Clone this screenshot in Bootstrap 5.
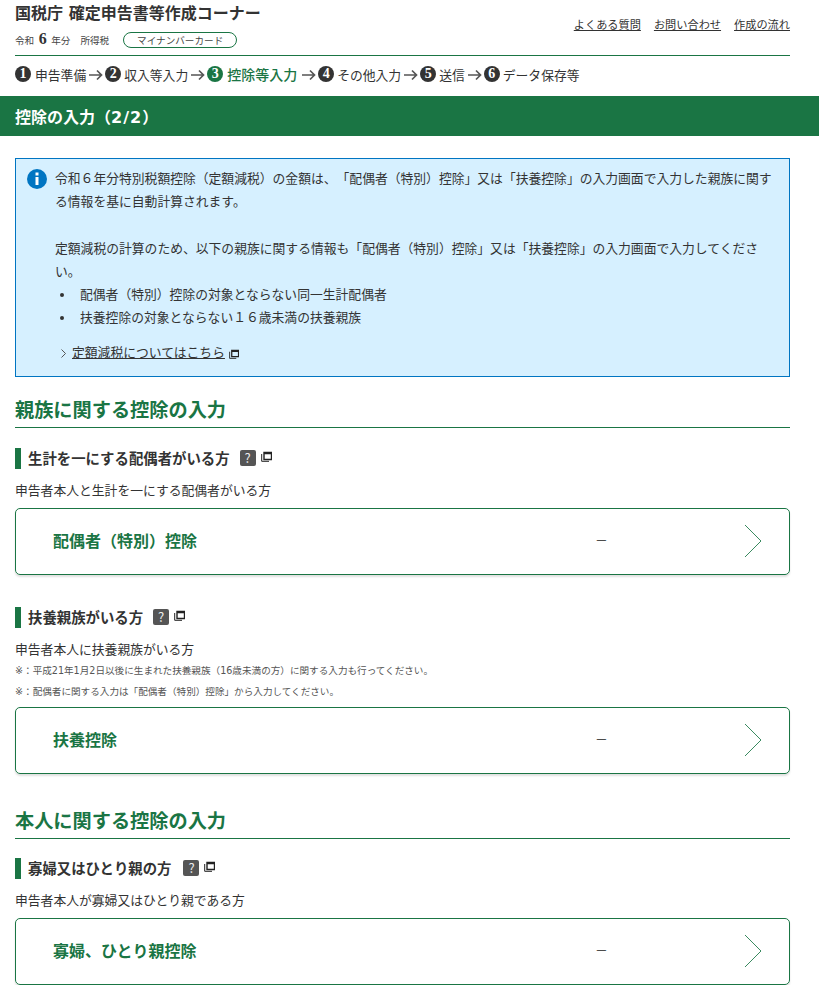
<!DOCTYPE html>
<html lang="ja">
<head>
    <meta charset="UTF-8">
    <meta name="viewport" content="width=device-width, initial-scale=1.0">
    <title>確定申告書等作成コーナー</title>
    <link href="https://cdn.jsdelivr.net/npm/bootstrap@5.3.0/dist/css/bootstrap.min.css" rel="stylesheet">
    <style>
        body {
            font-family: "Noto Sans CJK JP", "Noto Sans", sans-serif;
            font-size: 12.8px;
            line-height: 23px;
            color: #333;
            background: #fff;
            text-spacing-trim: space-all;
        }
        a { color: #333; }
        .site-head {
            margin: 0 29px 0 15px;
            height: 56px;
            border-bottom: 1px solid #1a7544;
        }
        .site-title { font-size: 16px; font-weight: 700; line-height: 24px; word-spacing: 2px; }
        .year-line { font-size: 9.6px; line-height: 20px; margin-top: 5px; color: #444; }
        .year-num { font-family: "Liberation Serif", serif; font-size: 16px; font-weight: 700; margin: 0 4.500px; color: #333; }
        .tax-name { margin-left: 10px; }
        .card-pill {
            line-height: 14px;
            width: 114px;
            border: 1px solid #1a7544;
            border-radius: 8px;
            text-align: center;
            margin-left: 14px;
        }
        .head-links { gap: 13px; font-size: 11.2px; padding-top: 13px; }
        .step-bar { margin: 0 15px 4px; height: 36px; }
        .step-num {
            flex: 0 0 16px;
            height: 16px;
            border-radius: 50%;
            background: #333;
            color: #fff;
            font-family: "Liberation Serif", serif;
            font-weight: 700;
            font-size: 14px;
            line-height: 16px;
            text-align: center;
            margin-right: 3px;
        }
        .step-first { margin-right: 4px; }
        .step-arrow { margin: 1px 2px 0 3px; flex: 0 0 14px; }
        .step-now { color: #1a7544; font-size: 14px; font-weight: 500; margin-right: 2px; }
        .step-now .step-num { background: #1a7544; margin-right: 4px; }
        .page-band {
            background: #1a7544;
            color: #fff;
            font-size: 16px;
            font-weight: 700;
            height: 40px;
            line-height: 41px;
            padding-left: 15px;
        }
        .band-num { font-family: "DejaVu Sans", sans-serif; letter-spacing: 1px; }
        .note-box {
            margin: 22px 29px 0 15px;
            height: 219px;
            padding: 7px 12px 0 11px;
            background: #d6f0ff;
            border: 1px solid #0075c2;
        }
        .note-icon { flex: 0 0 20px; height: 20px; margin-top: 3px; margin-right: 8px; }
        .note-list { margin: 0; padding: 0 0 0 20px; }
        .note-list li { padding-left: 5px; }
        .note-list li::marker { font-size: 11px; }
        .note-link { margin: 12px 0 0 5px; }
        .link-chev { margin: 0 6px 0 1px; }
        .win-icon { vertical-align: -2px; margin-left: 1px; }
        .sect-title {
            margin: 20px 29px 0 15px;
            color: #1a7544;
            font-size: 19.2px;
            font-weight: 700;
            line-height: 25px;
            height: 31px;
            border-bottom: 1px solid #1a7544;
        }
        .sect-next { margin-top: 34px; }
        .item-title {
            margin: 20px 29px 0 15px;
            border-left: 6px solid #1a7544;
            padding: 0 0 2px 7px;
            height: 21px;
            line-height: 19px;
            font-size: 14.4px;
            font-weight: 700;
        }
        .item-next { margin-top: 32px; }
        .item-last { margin-top: 19px; }
        .item-last .help-mark { margin-left: 12px; }
        .help-mark {
            flex: 0 0 16px;
            height: 16px;
            background: #555;
            color: #eee;
            border-radius: 2px;
            font-size: 13px;
            font-weight: 400;
            line-height: 16px;
            text-align: center;
            margin: 0 5px 0 10px;
        }
        .item-win { margin-bottom: 2px; }
        .item-text { margin: 10px 29px 0 15px; line-height: 22px; }
        .item-small { margin: 0 29px 0 15px; font-family: "DejaVu Sans", "Noto Sans CJK JP", sans-serif; font-size: 9.6px; line-height: 21px; color: #555; }
        .entry-box {
            margin: 7px 29px 0 15px;
            height: 67px;
            padding: 0 27px 0 37px;
            border: 1px solid #1a7544;
            border-radius: 5px;
            box-shadow: 0 2px 2px rgba(0, 0, 0, .12);
        }
        .entry-tight { margin-top: 5px; }
        .entry-name { color: #1a7544; font-size: 16px; font-weight: 700; flex: 0 0 542px; line-height: 20px; margin-bottom: 3px; }
        .entry-val { flex: 1 1 auto; margin-bottom: 4px; color: #222; }
        .entry-chev { margin-bottom: 2px; }
    </style>
</head>
<body>
    <header class="site-head d-flex justify-content-between">
        <div>
            <div class="site-title">国税庁 確定申告書等作成コーナー</div>
            <div class="year-line d-flex align-items-center">
                <span>令和<span class="year-num">6</span>年分</span>
                <span class="tax-name">所得税</span>
                <span class="card-pill">マイナンバーカード</span>
            </div>
        </div>
        <div class="head-links d-flex">
            <a href="#">よくある質問</a>
            <a href="#">お問い合わせ</a>
            <a href="#">作成の流れ</a>
        </div>
    </header>

    <div class="step-bar d-flex align-items-center">
        <span class="step-num step-first">1</span>申告準備
        <svg class="step-arrow" width="14" height="12" viewBox="0 0 14 12"><path d="M0 6h12.500M8 1.500L12.500 6 8 10.500" fill="none" stroke="#555" stroke-width="1.700"/></svg>
        <span class="step-num">2</span>収入等入力
        <svg class="step-arrow" width="14" height="12" viewBox="0 0 14 12"><path d="M0 6h12.500M8 1.500L12.500 6 8 10.500" fill="none" stroke="#555" stroke-width="1.700"/></svg>
        <span class="step-now d-flex align-items-center"><span class="step-num">3</span>控除等入力</span>
        <svg class="step-arrow" width="14" height="12" viewBox="0 0 14 12"><path d="M0 6h12.500M8 1.500L12.500 6 8 10.500" fill="none" stroke="#555" stroke-width="1.700"/></svg>
        <span class="step-num">4</span>その他入力
        <svg class="step-arrow" width="14" height="12" viewBox="0 0 14 12"><path d="M0 6h12.500M8 1.500L12.500 6 8 10.500" fill="none" stroke="#555" stroke-width="1.700"/></svg>
        <span class="step-num">5</span>送信
        <svg class="step-arrow" width="14" height="12" viewBox="0 0 14 12"><path d="M0 6h12.500M8 1.500L12.500 6 8 10.500" fill="none" stroke="#555" stroke-width="1.700"/></svg>
        <span class="step-num">6</span>データ保存等
    </div>

    <div class="page-band">控除の入力（<span class="band-num">2/2</span>）</div>

    <div class="note-box d-flex">
        <svg class="note-icon" viewBox="0 0 20 20">
            <circle cx="10" cy="10" r="10" fill="#0075c2"/>
            <rect x="8.500" y="8" width="3" height="8" fill="#fff"/>
            <rect x="8.500" y="3.500" width="3" height="3" fill="#fff"/>
        </svg>
        <div>
            <div>令和６年分特別税額控除（定額減税）の金額は、「配偶者（特別）控除」又は「扶養控除」の入力画面で入力した親族に関する情報を基に自動計算されます。</div>
            <div class="mt-4">定額減税の計算のため、以下の親族に関する情報も「配偶者（特別）控除」又は「扶養控除」の入力画面で入力してください。</div>
            <ul class="note-list">
                <li>配偶者（特別）控除の対象とならない同一生計配偶者</li>
                <li>扶養控除の対象とならない１６歳未満の扶養親族</li>
            </ul>
            <div class="note-link">
                <svg class="link-chev" width="5" height="9" viewBox="0 0 5 9"><path d="M.5.500l4 4-4 4" fill="none" stroke="#555"/></svg><a href="#">定額減税についてはこちら</a>
                <svg class="win-icon" width="10" height="10" viewBox="0 0 11 11"><path d="M3 1.500h7.500v7H3zM3 2.500h7.500" fill="none" stroke="#222" stroke-width="1.400"/><path d="M.7 3v7.300H8" fill="none" stroke="#222"/></svg>
            </div>
        </div>
    </div>

    <h2 class="sect-title">親族に関する控除の入力</h2>

    <div class="item-title d-flex align-items-center">生計を一にする配偶者がいる方
        <span class="help-mark">?</span>
        <svg class="item-win" width="11" height="11" viewBox="0 0 11 11"><path d="M3 1.500h7.500v7H3zM3 2.500h7.500" fill="none" stroke="#222" stroke-width="1.400"/><path d="M.7 3v7.300H8" fill="none" stroke="#222"/></svg>
    </div>
    <p class="item-text mb-0">申告者本人と生計を一にする配偶者がいる方</p>
    <div class="entry-box d-flex align-items-center">
        <span class="entry-name">配偶者（特別）控除</span>
        <span class="entry-val">－</span>
        <svg class="entry-chev" width="18" height="34" viewBox="0 0 18 34"><path d="M1 1l16 16L1 33" fill="none" stroke="#3a8a60"/></svg>
    </div>

    <div class="item-title item-next d-flex align-items-center">扶養親族がいる方
        <span class="help-mark">?</span>
        <svg class="item-win" width="11" height="11" viewBox="0 0 11 11"><path d="M3 1.500h7.500v7H3zM3 2.500h7.500" fill="none" stroke="#222" stroke-width="1.400"/><path d="M.7 3v7.300H8" fill="none" stroke="#222"/></svg>
    </div>
    <p class="item-text mb-0">申告者本人に扶養親族がいる方</p>
    <p class="item-small">※：平成21年1月2日以後に生まれた扶養親族（16歳未満の方）に関する入力も行ってください。</p>
    <p class="item-small">※：配偶者に関する入力は「配偶者（特別）控除」から入力してください。</p>
    <div class="entry-box entry-tight d-flex align-items-center">
        <span class="entry-name">扶養控除</span>
        <span class="entry-val">－</span>
        <svg class="entry-chev" width="18" height="34" viewBox="0 0 18 34"><path d="M1 1l16 16L1 33" fill="none" stroke="#3a8a60"/></svg>
    </div>

    <h2 class="sect-title sect-next">本人に関する控除の入力</h2>

    <div class="item-title item-last d-flex align-items-center">寡婦又はひとり親の方
        <span class="help-mark">?</span>
        <svg class="item-win" width="11" height="11" viewBox="0 0 11 11"><path d="M3 1.500h7.500v7H3zM3 2.500h7.500" fill="none" stroke="#222" stroke-width="1.400"/><path d="M.7 3v7.300H8" fill="none" stroke="#222"/></svg>
    </div>
    <p class="item-text mb-0">申告者本人が寡婦又はひとり親である方</p>
    <div class="entry-box d-flex align-items-center">
        <span class="entry-name">寡婦、ひとり親控除</span>
        <span class="entry-val">－</span>
        <svg class="entry-chev" width="18" height="34" viewBox="0 0 18 34"><path d="M1 1l16 16L1 33" fill="none" stroke="#3a8a60"/></svg>
    </div>

    <script src="https://cdn.jsdelivr.net/npm/bootstrap@5.3.0/dist/js/bootstrap.bundle.min.js"></script>
</body>
</html>
